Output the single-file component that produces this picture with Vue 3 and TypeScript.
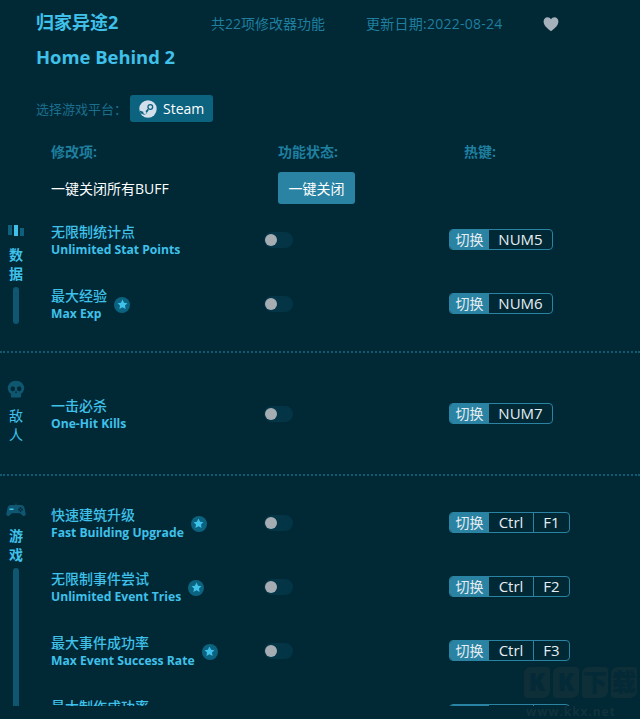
<script setup lang="ts">
interface Cheat {
  zh: string;
  en: string;
  star?: boolean;
  keys: string[];
}

interface Group {
  id: string;
  label: string[];
  barHeight: number;
  cheats: Cheat[];
}

const groups: Group[] = [
  {
    id: 'data',
    label: ['数', '据'],
    barHeight: 37,
    cheats: [
      { zh: '无限制统计点', en: 'Unlimited Stat Points', keys: ['NUM5'] },
      { zh: '最大经验', en: 'Max Exp', star: true, keys: ['NUM6'] },
    ],
  },
  {
    id: 'enemy',
    label: ['敌', '人'],
    barHeight: 0,
    cheats: [{ zh: '一击必杀', en: 'One-Hit Kills', keys: ['NUM7'] }],
  },
  {
    id: 'game',
    label: ['游', '戏'],
    barHeight: 300,
    cheats: [
      { zh: '快速建筑升级', en: 'Fast Building Upgrade', star: true, keys: ['Ctrl', 'F1'] },
      { zh: '无限制事件尝试', en: 'Unlimited Event Tries', star: true, keys: ['Ctrl', 'F2'] },
      { zh: '最大事件成功率', en: 'Max Event Success Rate', star: true, keys: ['Ctrl', 'F3'] },
      { zh: '最大制作成功率', en: 'Max Craft Success Rate', star: true, keys: ['Ctrl', 'F4'] },
    ],
  },
];

const logoChars = ['K', 'K', '下', '载'];
</script>

<template>
  <div class="page">
    <div class="clip">
      <header class="top">
        <h1 class="title">归家异途2</h1>
        <span class="meta count">共22项修改器功能</span>
        <span class="meta date">更新日期:2022-08-24</span>
        <svg class="heart" viewBox="0 0 16 16" width="16" height="16">
          <path d="M8 15.2C3.4 11.6.6 9 .6 5.4.6 2.9 2.4 1.2 4.5 1.2 6 1.2 7.3 2 8 3.3 8.7 2 10 1.2 11.5 1.2c2.100 0 3.900 1.700 3.900 4.200C15.400 9 12.600 11.600 8 15.200z" fill="#a5b2bc" />
        </svg>
      </header>
      <h2 class="title-en">Home Behind 2</h2>

      <div class="platform">
        <span class="platform-label">选择游戏平台：</span>
        <button class="steam">
          <svg viewBox="0 0 18 18" width="18" height="18">
            <circle cx="9" cy="9" r="8.700" fill="#d3dfea" />
            <circle cx="11.300" cy="7" r="3" fill="#0b6380" />
            <circle cx="11.300" cy="7" r="1.700" fill="#d3dfea" />
            <path d="M0.600 10.400 5.500 12.300 8.800 8.700 9.800 10 7 14 5 14.700 1.500 13.200z" fill="#0b6380" />
            <circle cx="5.800" cy="12.500" r="1.500" fill="#d3dfea" />
          </svg>
          <span>Steam</span>
        </button>
      </div>

      <div class="columns">
        <span class="col-name">修改项:</span>
        <span class="col-state">功能状态:</span>
        <span class="col-key">热键:</span>
      </div>

      <div class="close-all">
        <span class="close-text">一键关闭所有BUFF</span>
        <button class="close-btn">一键关闭</button>
      </div>

      <section v-for="group in groups" :key="group.id" class="group" :class="group.id">
        <aside class="side">
          <svg v-if="group.id === 'data'" class="side-icon" viewBox="0 0 16 12" width="16" height="12">
            <rect x="0" y="0" width="4" height="10" fill="#0f607d" />
            <rect x="6" y="0" width="4" height="11" fill="#3fc1ea" />
            <rect x="12" y="3" width="4" height="8" fill="#0f607d" />
          </svg>
          <svg v-else-if="group.id === 'enemy'" class="side-icon" viewBox="0 0 18 18" width="18" height="18">
            <path fill-rule="evenodd" fill="#0f5670" d="M9 .8c4.600 0 8.200 3.100 8.200 7.300 0 2.600-1.300 4.600-3.100 5.700v2.400c0 .8-.6 1.300-1.300 1.300H5.200c-.7 0-1.300-.5-1.300-1.300v-2.400C2.100 12.700.8 10.700.8 8.100.8 3.900 4.400.8 9 .8zM5.800 6.300a2.200 2.500 0 1 0 0 5 2.200 2.500 0 0 0 0-5zM12.200 6.300a2.200 2.500 0 1 0 0 5 2.200 2.500 0 0 0 0-5zM9 10.800l-1 2.200h2z" />
          </svg>
          <svg v-else class="side-icon" viewBox="0 0 20 14" width="20" height="15">
            <path fill="#0f5670" d="M5 1.500h10c2 0 3 1 3.500 3l1.200 6c.3 1.800-1.800 2.800-3.200 1.500L14.200 9.800H5.800L3.500 12C2.100 13.300 0 12.300.3 10.500l1.200-6C2 2.500 3 1.500 5 1.500z" />
            <rect x="9.500" y="0" width="1" height="2" fill="#0f5670" />
            <rect x="3.500" y="5" width="4" height="1.500" fill="#3fc1ea" />
            <circle cx="14.500" cy="4.500" r=".9" fill="#002835" />
            <circle cx="14.500" cy="7.500" r=".9" fill="#002835" />
            <circle cx="13" cy="6" r=".9" fill="#002835" />
            <circle cx="16" cy="6" r=".9" fill="#002835" />
          </svg>
          <span v-for="ch in group.label" :key="ch" class="side-char">{{ ch }}</span>
          <i v-if="group.barHeight" class="side-bar" :style="{ height: group.barHeight + 'px' }"></i>
        </aside>

        <div class="rows">
          <div v-for="cheat in group.cheats" :key="cheat.en" class="row">
            <div class="name">
              <div class="name-text">
                <div class="zh">{{ cheat.zh }}</div>
                <div class="en">{{ cheat.en }}</div>
              </div>
              <span v-if="cheat.star" class="star">
                <svg viewBox="0 0 12 12" width="11" height="11">
                  <path d="M6 .6l1.700 3.400 3.700.5-2.700 2.600.7 3.700L6 9.100l-3.400 1.700.7-3.700L.6 4.500l3.700-.5z" fill="#3fc1ea" />
                </svg>
              </span>
            </div>
            <div class="toggle"><i class="knob"></i></div>
            <div class="hotkey">
              <span class="mode">切换</span>
              <span v-for="key in cheat.keys" :key="key" class="key" :class="{ wide: key.startsWith('NUM') }">{{ key }}</span>
            </div>
          </div>
        </div>
      </section>
    </div>

    <div class="watermark">
      <div class="wm-logo">
        <span v-for="(ch, i) in logoChars" :key="i" class="wm-block">{{ ch }}</span>
      </div>
      <div class="wm-url">www.kkx.net</div>
    </div>
  </div>
</template>

<style>
html,
body {
  margin: 0;
  background: #002835;
}
</style>

<style scoped>
.page {
  position: relative;
  width: 640px;
  height: 719px;
  overflow: hidden;
  background: #002835;
  font-family: "Open Sans", "Noto Sans CJK SC", sans-serif;
}

.clip {
  height: 706px;
  overflow: hidden;
}

.top {
  display: flex;
  align-items: center;
  height: 24px;
  padding: 9px 0 0 36px;
}

.title {
  width: 175px;
  margin: 0;
  font-size: 18px;
  font-weight: 700;
  color: #3fc1ea;
}

.meta {
  margin-top: 3px;
  font-size: 14px;
  color: #1f7f9f;
}

.count {
  width: 155px;
}

.date {
  width: 177px;
  letter-spacing: .25px;
}

.heart {
  margin-top: 5px;
}

.title-en {
  margin: 11px 0 0 36px;
  height: 26px;
  font-size: 18.4px;
  line-height: 26px;
  font-weight: 700;
  color: #3fc1ea;
}

.platform {
  display: flex;
  align-items: center;
  margin: 25px 0 0 36px;
}

.platform-label {
  width: 94px;
  font-size: 13px;
  color: #1b6f8d;
}

.steam {
  display: flex;
  align-items: center;
  gap: 6px;
  width: 83px;
  height: 27px;
  padding: 0 0 0 9px;
  border: 0;
  border-radius: 3px;
  background: #0b6380;
  color: #fff;
  font: inherit;
  font-size: 14px;
}

.columns {
  display: flex;
  margin: 20px 0 0 51px;
  height: 20px;
  line-height: 20px;
  font-size: 14px;
  font-weight: 700;
  color: #1f7f9f;
}

.col-name {
  width: 227px;
}

.col-state {
  width: 186px;
}

.close-all {
  display: flex;
  align-items: center;
  margin: 10px 0 0 51px;
}

.close-text {
  width: 227px;
  font-size: 14px;
  color: #fff;
}

.close-btn {
  width: 77px;
  height: 32px;
  padding: 0;
  border: 0;
  border-radius: 3px;
  background: #2a83a2;
  color: #fff;
  font: inherit;
  font-size: 14px;
}

.group {
  display: flex;
  box-sizing: border-box;
  border-bottom: 2px dotted #125a73;
}

.group.data {
  height: 140px;
  margin-top: 9px;
}

.group.enemy {
  height: 123px;
}

.group.game {
  border-bottom: 0;
}

.side {
  display: flex;
  flex-direction: column;
  align-items: center;
  flex: none;
  width: 32px;
  padding-top: 27px;
}

.data .side {
  padding-top: 12px;
}

.side-icon {
  flex: none;
  margin-bottom: 8px;
}

.side-char {
  height: 19px;
  font-size: 14px;
  line-height: 19px;
  font-weight: 700;
  color: #3fc1ea;
}

.enemy .side-char {
  font-weight: 400;
}

.side-bar {
  flex: none;
  width: 6px;
  margin-top: 4px;
  border-radius: 3px;
  background: #0f5670;
}

.rows {
  flex: none;
  padding: 30px 0 0 19px;
}

.data .rows {
  padding-top: 10px;
}

.enemy .rows {
  padding-top: 44px;
}

.row {
  display: flex;
  align-items: flex-start;
  height: 64px;
}

.name {
  display: flex;
  align-items: center;
  width: 213px;
}

.zh {
  height: 18px;
  font-size: 14px;
  line-height: 18px;
  font-weight: 500;
  color: #3fc1ea;
}

.en {
  height: 17px;
  font-size: 12.15px;
  line-height: 17px;
  font-weight: 700;
  color: #3fc1ea;
}

.star {
  display: flex;
  align-items: center;
  justify-content: center;
  width: 16px;
  height: 16px;
  margin-left: 7px;
  border-radius: 50%;
  background: #0b6380;
}

.toggle {
  flex: none;
  width: 29px;
  height: 16px;
  margin-top: 9px;
  border-radius: 8px;
  background: #033547;
}

.knob {
  display: block;
  width: 12px;
  height: 12px;
  margin: 2px 0 0 1px;
  border-radius: 50%;
  background: #a5adb2;
}

.hotkey {
  display: flex;
  height: 21px;
  margin: 6px 0 0 156px;
  box-sizing: border-box;
  border: 1px solid #2a83a2;
  border-radius: 4px;
  overflow: hidden;
  color: #e6eef2;
  font-size: 15px;
  line-height: 19px;
}

.mode {
  width: 39px;
  text-align: center;
  background: #2a83a2;
  font-size: 14px;
}

.key {
  width: 44px;
  text-align: center;
  border-left: 1px solid #2a83a2;
}

.mode + .key {
  border-left: 0;
}

.key.wide {
  width: 63px;
}

.key + .key {
  width: 35px;
}

.watermark {
  position: absolute;
  left: 524px;
  top: 667px;
  pointer-events: none;
}

.wm-logo {
  display: flex;
  gap: 3px;
}

.wm-block {
  width: 26px;
  height: 31px;
  border-radius: 6px 3px 7px 3px;
  background: #0e2e38;
  color: #032a36;
  font-size: 24px;
  line-height: 30px;
  font-weight: 900;
  text-align: center;
}

.wm-url {
  margin: 7px 0 0 2px;
  color: #12323c;
  font-size: 12px;
  line-height: 14px;
  font-weight: 700;
  letter-spacing: .9px;
}
</style>
